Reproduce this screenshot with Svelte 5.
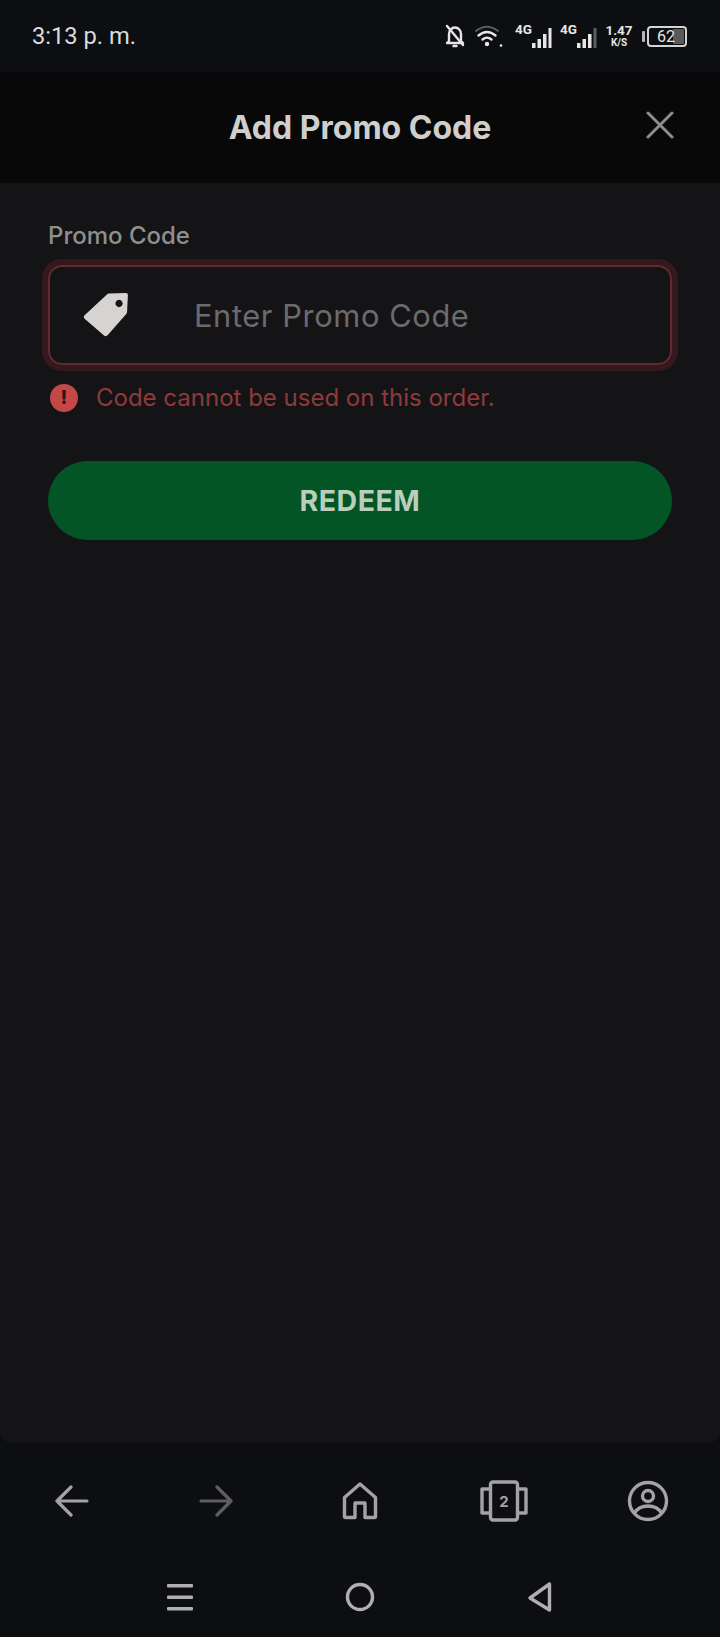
<script lang="ts">
	let promoCode = $state('');
</script>

<div class="screen">
	<div class="status-bar">
		<span class="time">3:13 p. m.</span>
		<div class="status-icons">
			<svg class="bell" width="22" height="24" viewBox="0 0 22 24" fill="none" stroke="#e6e6e6" stroke-width="2.4" stroke-linejoin="round" stroke-linecap="round">
				<path d="M5 17V10c0-3.5 2.500-6.500 6-6.500s6 3 6 6.500V17l2 2H3z" />
				<path d="M3 2l16 19" />
				<path d="M9.500 22h3" />
			</svg>
			<svg class="wifi" width="30" height="24" viewBox="0 0 30 24" fill="none" stroke-linecap="round">
				<path d="M2 7c7-5.500 15-5.500 22 0" stroke="#5c5c5c" stroke-width="2" />
				<path d="M4.500 11.500c5.500-4.500 11.500-4.500 17 0" stroke="#e6e6e6" stroke-width="2.400" />
				<path d="M8.500 15.500c3-2.500 6-2.500 9 0" stroke="#e6e6e6" stroke-width="2.400" />
				<circle cx="13" cy="20" r="2.200" fill="#e6e6e6" />
				<circle cx="27" cy="21.500" r="1.300" fill="#e6e6e6" />
			</svg>
			<div class="signal first">
				<span class="net">4G</span>
				<svg width="22" height="22" viewBox="0 0 22 22" fill="#e6e6e6">
					<rect x="1" y="17" width="3.500" height="5" />
					<rect x="6.500" y="13" width="3.500" height="9" />
					<rect x="12" y="8" width="3.500" height="14" />
					<rect x="17.500" y="2" width="3" height="20" />
				</svg>
			</div>
			<div class="signal">
				<span class="net">4G</span>
				<svg width="22" height="22" viewBox="0 0 22 22" fill="#e6e6e6">
					<rect x="1" y="17" width="3.500" height="5" />
					<rect x="6.500" y="13" width="3.500" height="9" />
					<rect x="12" y="8" width="3.500" height="14" />
					<rect x="17.500" y="2" width="3" height="20" fill="#5c5c5c" />
				</svg>
			</div>
			<div class="speed">
				<span class="speed-value">1.47</span>
				<span class="speed-unit">K/S</span>
			</div>
			<div class="battery">
				<span class="battery-cap"></span>
				<div class="battery-body">
					<span class="battery-fill">62</span>
				</div>
			</div>
		</div>
	</div>

	<header class="modal-header">
		<h1>Add Promo Code</h1>
		<svg class="close" width="28" height="28" viewBox="0 0 28 28" stroke="#8d8d8d" stroke-width="3" stroke-linecap="round">
			<path d="M2 2l24 24M26 2L2 26" />
		</svg>
	</header>

	<main class="sheet">
		<label class="field-label" for="promo">Promo Code</label>
		<div class="input-box">
			<svg class="tag" width="48" height="48" viewBox="0 0 46 46">
				<path fill="#d6d3d1" fill-rule="evenodd" d="M26 2.500l16-.5c1.300 0 2 .8 2 2l-.8 16c0 1-.4 1.800-1 2.400L24.500 42.500c-1 1-2.400 1-3.400.1L2.500 26.600c-1-1-1-2.300 0-3.300L23.600 3.600c.7-.7 1.500-1.100 2.400-1.100zM35.500 8.500a3.500 3.500 0 1 0 .01 0z" />
			</svg>
			<input id="promo" placeholder="Enter Promo Code" bind:value={promoCode} />
		</div>
		<div class="error">
			<span class="error-dot">!</span>
			<span>Code cannot be used on this order.</span>
		</div>
		<button class="redeem">REDEEM</button>
	</main>

	<nav class="browser-nav">
		<svg width="36" height="32" viewBox="0 0 36 32" fill="none" stroke="#a3a3a6" stroke-width="3.200" stroke-linecap="round" stroke-linejoin="round">
			<path d="M33 16H3M17 2L3 16l14 14" />
		</svg>
		<svg width="36" height="32" viewBox="0 0 36 32" fill="none" stroke="#5e5e61" stroke-width="3.200" stroke-linecap="round" stroke-linejoin="round">
			<path d="M3 16h30M19 2l14 14-14 14" />
		</svg>
		<svg width="36" height="38" viewBox="0 0 36 38" fill="none" stroke="#a3a3a6" stroke-width="3.400" stroke-linejoin="round">
			<path d="M2.500 34.500a1 1 0 0 0 1 1H13V21h10v14.500h9.500a1 1 0 0 0 1-1V15.500L18 2 2.500 15.500z" />
		</svg>
		<div class="tabs-icon">
			<svg width="48" height="42" viewBox="0 0 48 42" fill="none" stroke="#a3a3a6" stroke-width="3.400" stroke-linejoin="round">
				<rect x="10.500" y="2" width="27" height="38" rx="2.500" />
				<path d="M10.500 9H2v24h8.500M37.500 9H46v24h-8.500" />
			</svg>
			<span class="tabs-count">2</span>
		</div>
		<svg width="42" height="42" viewBox="0 0 42 42" fill="none" stroke="#a3a3a6" stroke-width="3.400">
			<circle cx="21" cy="21" r="18.500" />
			<circle cx="21" cy="16" r="5.500" />
			<path d="M7.500 33c3-5 8-7 13.500-7s10.500 2 13.500 7" />
		</svg>
	</nav>

	<nav class="system-nav">
		<svg width="28" height="30" viewBox="0 0 28 30" fill="#b0b0b3">
			<rect x="1" y="2" width="26" height="3.500" rx="1" />
			<rect x="1" y="13.500" width="26" height="3.500" rx="1" />
			<rect x="1" y="25" width="26" height="3.500" rx="1" />
		</svg>
		<svg width="30" height="30" viewBox="0 0 30 30" fill="none" stroke="#b0b0b3" stroke-width="3.400">
			<circle cx="15" cy="15" r="12.500" />
		</svg>
		<svg width="26" height="32" viewBox="0 0 26 32" fill="none" stroke="#b0b0b3" stroke-width="3.400" stroke-linejoin="round">
			<path d="M22.500 3v26L3 17z" />
		</svg>
	</nav>
</div>

<style>
	:global(body) {
		margin: 0;
		background: #0d0e12;
	}

	.screen {
		width: 720px;
		height: 1637px;
		display: flex;
		flex-direction: column;
		background: #0d0e12;
		font-family: Inter, 'Liberation Sans', sans-serif;
		overflow: hidden;
	}

	.status-bar {
		height: 72px;
		flex-shrink: 0;
		display: flex;
		align-items: center;
		justify-content: space-between;
		padding: 0 33px 0 32px;
		box-sizing: border-box;
	}

	.time {
		color: #dcdcdc;
		font-size: 23.700px;
		font-family: Roboto, sans-serif;
	}

	.status-icons {
		display: flex;
		align-items: center;
		gap: 7px;
	}

	.wifi {
		margin-left: 1px;
	}

	.signal {
		display: flex;
		align-items: flex-end;
		height: 24px;
		position: relative;
		width: 38px;
	}

	.signal.first {
		margin-left: 4px;
	}

	.signal svg {
		margin-left: auto;
	}

	.net {
		position: absolute;
		left: 0;
		top: -3px;
		font-size: 13.500px;
		font-weight: 700;
		color: #e6e6e6;
		font-family: Roboto, sans-serif;
	}

	.speed {
		display: flex;
		flex-direction: column;
		align-items: center;
		width: 28px;
		color: #e6e6e6;
		font-family: Roboto, sans-serif;
		font-weight: 700;
		line-height: 1;
	}

	.speed-value {
		font-size: 13.500px;
	}

	.speed-unit {
		font-size: 10px;
	}

	.battery {
		display: flex;
		align-items: center;
		gap: 2px;
		margin-left: 2px;
	}

	.battery-cap {
		width: 3px;
		height: 11px;
		background: #b5b5b5;
		border-radius: 1px;
	}

	.battery-body {
		width: 40px;
		height: 21px;
		box-sizing: border-box;
		border: 2px solid #d4d4d4;
		border-radius: 4px;
		padding: 1px;
		display: flex;
		background: linear-gradient(to right, transparent 68%, #5a5a5a 68%) content-box;
	}

	.battery-fill {
		color: #e6e6e6;
		font-family: Roboto, sans-serif;
		font-size: 16px;
		line-height: 15px;
		padding-left: 7px;
	}

	.modal-header {
		height: 111px;
		flex-shrink: 0;
		background: #080808;
		display: flex;
		align-items: center;
		justify-content: center;
		position: relative;
		box-sizing: border-box;
	}

	.modal-header h1 {
		margin: 0;
		color: #cfcfcd;
		font-size: 32px;
		font-weight: 700;
	}

	.close {
		position: absolute;
		right: 46px;
		top: 39px;
	}

	.sheet {
		flex: 1;
		background: #141416;
		border-radius: 0 0 12px 12px;
		padding: 38px 48px 0;
		display: flex;
		flex-direction: column;
	}

	.field-label {
		color: #8f8f8f;
		font-size: 24px;
		font-weight: 500;
		line-height: 29px;
		margin-bottom: 15px;
	}

	.input-box {
		height: 100px;
		box-sizing: border-box;
		border: 2px solid #622a30;
		border-radius: 14px;
		box-shadow: 0 0 0 6px #35181d;
		display: flex;
		align-items: center;
		padding-left: 32px;
		gap: 64px;
	}

	.input-box input {
		flex: 1;
		min-width: 0;
		background: none;
		border: none;
		outline: none;
		padding: 0;
		font-family: inherit;
		font-size: 30.800px;
		letter-spacing: 0.6px;
		color: #d2d2d0;
	}

	.input-box input::placeholder {
		color: #6b6b6d;
		opacity: 1;
	}

	.error {
		display: flex;
		align-items: center;
		gap: 18px;
		margin-top: 18px;
		padding-left: 2px;
		color: #8f3a3a;
		font-size: 24px;
		line-height: 30px;
	}

	.error-dot {
		width: 28px;
		height: 28px;
		border-radius: 50%;
		background: #c44848;
		color: #3a1010;
		font-size: 19px;
		font-weight: 800;
		display: flex;
		align-items: center;
		justify-content: center;
		flex-shrink: 0;
	}

	.redeem {
		margin-top: 48px;
		height: 79px;
		border: none;
		border-radius: 40px;
		background: #045526;
		color: #b9cfbc;
		font-family: Inter, sans-serif;
		font-size: 28.500px;
		font-weight: 700;
		letter-spacing: 0.5px;
		padding: 0;
	}

	.browser-nav {
		height: 114px;
		padding-top: 2px;
		box-sizing: border-box;
		flex-shrink: 0;
		display: grid;
		grid-template-columns: repeat(5, 144px);
		align-items: center;
		justify-items: center;
	}

	.tabs-icon {
		position: relative;
		display: flex;
	}

	.tabs-count {
		position: absolute;
		inset: 0;
		display: flex;
		align-items: center;
		justify-content: center;
		color: #a3a3a6;
		font-size: 15px;
		font-weight: 700;
	}

	.system-nav {
		height: 80px;
		flex-shrink: 0;
		display: grid;
		grid-template-columns: repeat(3, 180px);
		padding: 0 90px;
		align-items: center;
		justify-items: center;
	}
</style>
